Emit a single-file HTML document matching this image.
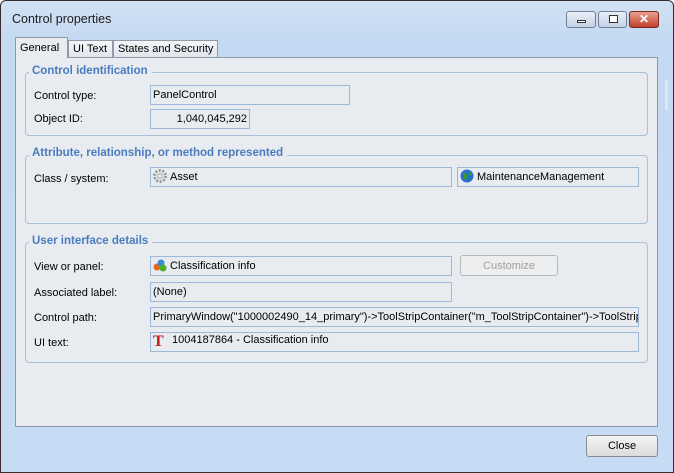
<!DOCTYPE html>
<html><head><style>
*{box-sizing:border-box}
body{margin:0;width:674px;height:473px;overflow:hidden;font-family:"Liberation Sans",sans-serif;font-size:11px;color:#000;background:#fff}
.win{position:absolute;left:0;top:0;width:674px;height:473px;box-shadow:inset 0 0 0 1px #3a2a2a;background:linear-gradient(#d2e2f5,#c4d9f2 40px,#c6dbf4);border-radius:6px 6px 0 0}
.a{position:absolute}
.title{left:12px;top:12px;font-size:12.5px;color:#1a1a1a}
.wb{top:11px;height:17px;border:1px solid #6f7f96;border-radius:3px;background:linear-gradient(#e8eef7,#c4d2e6)}
.panel{left:15px;top:57px;width:643px;height:370px;background:#e8ebef;border:1px solid #8e9aa8}
.tab{top:40px;height:18px;border:1px solid #8e9aa8;border-bottom:none;background:linear-gradient(#f4f6f9,#dfe5ec);padding:2px 4px 0;font-size:11px;white-space:nowrap}
.tab.sel{top:37px;height:21px;background:#e8ebef;padding-top:4px;z-index:2}
.grp{border:1px solid #a8c0dc;border-radius:4px}
.leg{font-weight:bold;color:#4a7cbf;background:#e8ebef;padding:0 4px 0 3px;font-size:11.5px}
.lbl{left:34px}
.box{border:1px solid #9db8d8;background:#e8ebef;padding:3px 2px 0;white-space:nowrap;overflow:hidden;height:20px}
.btn{border:1px solid #8a8a8a;border-radius:3px;background:linear-gradient(#f4f4f4,#dcdcdc);text-align:center;padding-top:4px}
.ic{display:inline-block;width:14px;height:14px;vertical-align:-3px;margin-right:3px}
</style></head><body>
<div class="win">
<div class="a title">Control properties</div>
<div class="a wb" style="left:566px;width:30px"><div class="a" style="left:10px;top:8px;width:9px;height:3px;background:#fff;border:1px solid #333"></div></div>
<div class="a wb" style="left:598px;width:29px"><div class="a" style="left:10px;top:3px;width:9px;height:8px;border:1px solid #333;background:#fff"></div></div>
<div class="a wb" style="left:629px;width:30px;background:linear-gradient(#e8a090,#c0402a);border-color:#7a2a20;color:#fff;font-weight:bold;text-align:center;font-size:12px;line-height:14px">✕</div>
<div class="a" style="left:665px;top:80px;width:3px;height:30px;background:#dde8f4"></div>

<div class="a tab sel" style="left:15px;width:53px">General</div>
<div class="a tab" style="left:68px;width:45px">UI Text</div>
<div class="a tab" style="left:113px;width:105px">States and Security</div>
<div class="a panel"></div>

<div class="a grp" style="left:25px;top:72px;width:623px;height:64px"></div>
<div class="a leg" style="left:29px;top:65px">Control identification</div>
<div class="a lbl" style="top:90px">Control type:</div>
<div class="a box" style="left:150px;top:85px;width:200px">PanelControl</div>
<div class="a lbl" style="top:113px">Object ID:</div>
<div class="a box" style="left:150px;top:109px;width:100px;text-align:right">1,040,045,292</div>

<div class="a grp" style="left:25px;top:155px;width:623px;height:69px"></div>
<div class="a leg" style="left:29px;top:147px">Attribute, relationship, or method represented</div>
<div class="a lbl" style="top:173px">Class / system:</div>
<div class="a box" style="left:150px;top:167px;width:302px;padding-top:1px"><svg class="ic" viewBox="0 0 14 14"><circle cx="7" cy="7" r="5.5" fill="none" stroke="#999" stroke-width="3" stroke-dasharray="2 1.5"/><circle cx="7" cy="7" r="3" fill="#bbb"/><circle cx="7" cy="7" r="1.5" fill="#eee"/></svg>Asset</div>
<div class="a box" style="left:457px;top:167px;width:182px;padding-top:1px"><svg class="ic" viewBox="0 0 14 14"><circle cx="7" cy="7" r="6.5" fill="#2a70c8"/><path d="M3 4c2-1 3 1 4 2s-1 3 0 5c-2 0-4-2-4-4zM9 2c2 1 3 3 3 5-1-1-3 0-3-2z" fill="#3a9a2a"/></svg>MaintenanceManagement</div>

<div class="a grp" style="left:25px;top:242px;width:623px;height:121px"></div>
<div class="a leg" style="left:29px;top:235px">User interface details</div>
<div class="a lbl" style="top:261px">View or panel:</div>
<div class="a box" style="left:150px;top:256px;width:302px;padding-top:1px"><svg class="ic" viewBox="0 0 14 14"><circle cx="4" cy="9" r="3.5" fill="#e06a20"/><circle cx="8" cy="5" r="3.5" fill="#3a8ad8"/><circle cx="10" cy="10" r="3.5" fill="#4ab030"/></svg>Classification info</div>
<div class="a btn" style="left:460px;top:255px;width:98px;height:21px;color:#a0a0a0;border-color:#b8b8b8;background:#eceef0">Customize</div>
<div class="a lbl" style="top:287px">Associated label:</div>
<div class="a box" style="left:150px;top:282px;width:302px">(None)</div>
<div class="a lbl" style="top:312px">Control path:</div>
<div class="a box" style="left:150px;top:307px;width:489px">PrimaryWindow("1000002490_14_primary")-&gt;ToolStripContainer("m_ToolStripContainer")-&gt;ToolStripContainer</div>
<div class="a lbl" style="top:337px">UI text:</div>
<div class="a box" style="left:150px;top:332px;width:489px;padding-top:1px"><span class="ic" style="color:#c02020;font-family:'Liberation Serif',serif;font-weight:bold;font-size:16px;line-height:14px;width:16px">T</span>1004187864 - Classification info</div>

<div class="a btn" style="left:586px;top:435px;width:72px;height:22px">Close</div>
</div>
</body></html>
